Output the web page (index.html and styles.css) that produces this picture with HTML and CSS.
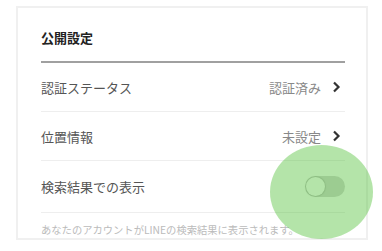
FILE: index.html
```html
<!DOCTYPE html>
<html lang="ja">
<head>
<meta charset="utf-8">
<link rel="stylesheet" href="styles.css">
</head>
<body>
<div class="card">
  <div class="title">公開設定</div>
  <div class="row">
    <span class="label">認証ステータス</span>
    <span class="value">認証済み<svg class="chev" width="9" height="12" viewBox="0 0 9 12"><polyline points="2,1.5 6.5,6 2,10.5" fill="none" stroke="#333" stroke-width="2.2"/></svg></span>
  </div>
  <div class="row">
    <span class="label">位置情報</span>
    <span class="value">未設定<svg class="chev" width="9" height="12" viewBox="0 0 9 12"><polyline points="2,1.5 6.5,6 2,10.5" fill="none" stroke="#333" stroke-width="2.2"/></svg></span>
  </div>
  <div class="row tall">
    <span class="label">検索結果での表示</span>
    <span class="toggle"><span class="knob"></span></span>
  </div>
  <div class="note">あなたのアカウントがLINEの検索結果に表示されます。</div>
</div>
<div class="touch"></div>
</body>
</html>
```
FILE: styles.css
```css
html, body {
  margin: 0;
  padding: 0;
  background: #fff;
}
body {
  width: 382px;
  height: 251px;
  position: relative;
  overflow: hidden;
  font-family: "Noto Sans CJK JP", "Noto Sans", sans-serif;
  padding: 6px 0 0 16px;
  box-sizing: border-box;
}
.card {
  width: 352px;
  height: 234px;
  box-sizing: border-box;
  border: 2px solid #f0f0f0;
  padding: 0 21px 0 23px;
}
.title {
  font-size: 13px;
  font-weight: bold;
  color: #222;
  line-height: 18px;
  padding: 21px 0 14px;
  border-bottom: 2px solid #a0a0a0;
}
.row {
  height: 48px;
  display: flex;
  align-items: center;
  justify-content: space-between;
  border-bottom: 1px solid #eeeeee;
  font-size: 13px;
}
.row.tall {
  height: 51px;
}
.label {
  color: #555;
}
.value {
  color: #888;
  display: flex;
  align-items: center;
  gap: 11px;
}
.chev {
  display: block;
  margin-right: 4px;
}
.toggle {
  width: 40px;
  height: 21px;
  border-radius: 11px;
  background: #d6d6d6;
  position: relative;
}
.knob {
  position: absolute;
  left: 1px;
  top: 1px;
  width: 19px;
  height: 19px;
  border-radius: 50%;
  background: #fff;
  box-shadow: 0 0 1px 1px rgba(0,0,0,0.12);
}
.note {
  font-size: 10.3px;
  color: #bbb;
  line-height: 14px;
  padding-top: 10px;
}
.touch {
  position: absolute;
  left: 270px;
  top: 145px;
  width: 103px;
  height: 94px;
  border-radius: 50%;
  background: rgba(76, 190, 50, 0.42);
}
```
